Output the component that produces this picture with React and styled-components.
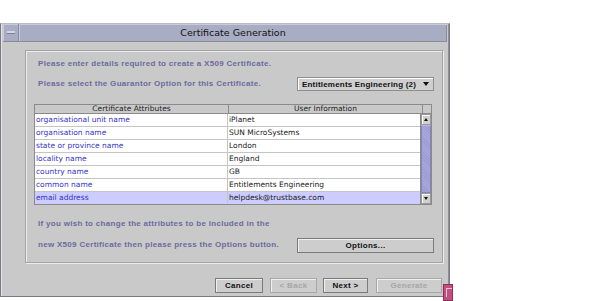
import React from "react";
import styled, { createGlobalStyle } from "styled-components";

const Global = createGlobalStyle`
  html, body { margin: 0; padding: 0; background: #ffffff; }
  body { font-family: "DejaVu Sans", "Liberation Sans", sans-serif; }
`;

const Page = styled.div`
  position: relative;
  width: 610px;
  height: 301px;
  padding-top: 23px;
  box-sizing: border-box;
`;

const Window = styled.div`
  width: 450px;
  height: 274px;
  box-sizing: border-box;
  border: 1px solid #7a7a86;
  border-top-color: #b8b8c4;
  background: #c9c9c9;
  padding: 0 2px 2px 2px;
  display: flex;
  flex-direction: column;
  box-shadow: inset 1px 0 0 #e4e4e4, inset -1px 0 0 #8e8e98;
`;

const TitleBar = styled.div`
  height: 17px;
  display: flex;
  border-bottom: 1px solid #8a8c9c;
  background: #a9adc4;
`;

const MenuBtn = styled.div`
  width: 15px;
  border-right: 1px solid #8a8c9c;
  box-shadow: inset 1px 1px 0 #c8cbdc;
  display: flex;
  align-items: center;
  justify-content: center;
  &::after {
    content: "";
    width: 8px;
    height: 2px;
    background: #d4d6e4;
    border-bottom: 1px solid #7e8092;
  }
`;

const Title = styled.div`
  flex: 1;
  text-align: center;
  font-size: 9.5px;
  line-height: 17px;
  color: #111;
  box-shadow: inset 1px 1px 0 #c8cbdc, inset -1px 0 0 #8a8c9c;
`;

const Body = styled.div`
  flex: 1;
  display: flex;
  flex-direction: column;
  padding: 8px 4px 0 22px;
`;

const Panel = styled.div`
  height: 213px;
  box-sizing: border-box;
  border: 1px solid #a4a4a4;
  box-shadow: inset 1px 1px 0 #ececec, 1px 1px 0 #ececec;
  padding: 7px 8px 0 8px;
  display: flex;
  flex-direction: column;
`;

const Label = styled.div`
  font-family: "Liberation Sans", "DejaVu Sans", sans-serif;
  font-size: 8px;
  font-weight: bold;
  color: #6b6b9e;
  line-height: 12px;
  padding-left: 4px;
  white-space: nowrap;
  letter-spacing: 0.3px;
  margin-top: ${(p) => p.$mt || 0}px;
`;

const Row = styled.div`
  display: flex;
  align-items: center;
  justify-content: space-between;
  margin-top: ${(p) => p.$mt || 0}px;
  height: ${(p) => p.$h || 14}px;
`;

const Combo = styled.div`
  width: 137px;
  height: 14px;
  box-sizing: border-box;
  border: 1px solid #8e8e8e;
  box-shadow: inset 1px 1px 0 #ffffff;
  background: #cfcfcf;
  display: flex;
  align-items: center;
  justify-content: space-between;
  padding: 0 4px 0 4px;
  font-family: "Liberation Sans", "DejaVu Sans", sans-serif;
  font-size: 8px;
  font-weight: bold;
  letter-spacing: 0.2px;
  color: #111;
  white-space: nowrap;
`;

const Arrow = styled.span`
  width: 0;
  height: 0;
  border-left: 3.5px solid transparent;
  border-right: 3.5px solid transparent;
  border-top: 4px solid #111;
`;

const TableWrap = styled.div`
  margin-top: 13px;
  width: 398px;
  display: flex;
  flex-direction: column;
`;

const Header = styled.div`
  display: grid;
  grid-template-columns: 194px 194px 10px;
  height: 9px;
  border-top: 1px solid #8a8a8a;
`;

const HeadCell = styled.div`
  font-size: 7.5px;
  line-height: 8px;
  text-align: center;
  color: #222;
  border-left: 1px solid #8a8a8a;
  border-right: ${(p) => (p.$last ? "1px solid #8a8a8a" : "0")};
  border-bottom: 1px solid #8a8a8a;
  box-sizing: border-box;
  overflow: hidden;
  white-space: nowrap;
`;

const TableBody = styled.div`
  display: flex;
  border: 1px solid #8a8a8a;
  border-top: 0;
  height: 90px;
`;

const Rows = styled.div`
  flex: 1;
  display: flex;
  flex-direction: column;
  background: #fff;
`;

const DataRow = styled.div`
  display: grid;
  grid-template-columns: 193px 1fr;
  height: 13px;
  box-sizing: border-box;
  border-bottom: 1px solid #c4c4c4;
  background: ${(p) => (p.$sel ? "#ccccff" : "#ffffff")};
  &:last-child { border-bottom: 0; height: 12px; }
`;

const Cell = styled.div`
  font-size: 7.5px;
  line-height: 12px;
  padding-left: 1px;
  color: ${(p) => (p.$key ? "#3535c4" : "#1a1a1a")};
  border-right: ${(p) => (p.$key ? "1px solid #c4c4c4" : "0")};
  white-space: nowrap;
  overflow: hidden;
`;

const Scroll = styled.div`
  width: 10px;
  display: flex;
  flex-direction: column;
  border-left: 1px solid #8a8a8a;
  background: #cccccc;
`;

const ScrollBtn = styled.div`
  height: 11px;
  box-sizing: border-box;
  border: 1px solid #9a9a9a;
  box-shadow: inset 1px 1px 0 #fff;
  background: #d0d0d0;
  display: flex;
  align-items: center;
  justify-content: center;
  &::after {
    content: "";
    width: 0;
    height: 0;
    border-left: 2.5px solid transparent;
    border-right: 2.5px solid transparent;
    ${(p) =>
      p.$down ? "border-top: 3px solid #111;" : "border-bottom: 3px solid #111;"}
  }
`;

const Thumb = styled.div`
  flex: 1;
  background: repeating-linear-gradient(45deg, #9c9cd0 0 1px, #a8a8dc 1px 2px);
  border: 1px solid #8484b8;
  border-top-color: #b8b8e8;
`;

const Button = styled.div`
  width: ${(p) => p.$w}px;
  height: 15px;
  box-sizing: border-box;
  border: 1px solid ${(p) => (p.$disabled ? "#a8a8a8" : "#7a7a7a")};
  box-shadow: inset 1px 1px 0 #f0f0f0;
  background: #cdcdcd;
  font-family: "Liberation Sans", "DejaVu Sans", sans-serif;
  font-size: 8px;
  font-weight: bold;
  line-height: 13px;
  text-align: center;
  color: ${(p) => (p.$disabled ? "#a6a6a6" : "#111")};
  margin-left: ${(p) => p.$ml || 0}px;
  letter-spacing: 0.3px;
`;

const Buttons = styled.div`
  display: flex;
  padding-left: 190px;
  margin-top: 15px;
`;

const Overlay = styled.div`
  position: absolute;
  left: 443px;
  top: 284px;
  width: 10px;
  height: 17px;
  box-sizing: border-box;
  background: #c2507e;
  border: 1px solid #8e2f5a;
  &::after {
    content: "";
    position: absolute;
    left: 2px;
    top: 3px;
    width: 5px;
    height: 8px;
    border-left: 1px solid #f4c4d8;
    border-top: 1px solid #f4c4d8;
  }
`;

const data = [
  ["organisational unit name", "iPlanet"],
  ["organisation name", "SUN MicroSystems"],
  ["state or province name", "London"],
  ["locality name", "England"],
  ["country name", "GB"],
  ["common name", "Entitlements Engineering"],
  ["email address", "helpdesk@trustbase.com"],
];

export default function App() {
  return (
    <Page>
      <Global />
      <Window>
        <TitleBar>
          <MenuBtn />
          <Title>Certificate Generation</Title>
        </TitleBar>
        <Body>
          <Panel>
            <Label>Please enter details required to create a X509 Certificate.</Label>
            <Row $mt={7} $h={14}>
              <Label>Please select the Guarantor Option for this Certificate.</Label>
              <Combo>
                <span>Entitlements Engineering (2)</span>
                <Arrow />
              </Combo>
            </Row>
            <TableWrap>
              <Header>
                <HeadCell>Certificate Attributes</HeadCell>
                <HeadCell>User Information</HeadCell>
                <HeadCell $last />
              </Header>
              <TableBody>
                <Rows>
                  {data.map(([k, v], i) => (
                    <DataRow key={k} $sel={i === data.length - 1}>
                      <Cell $key>{k}</Cell>
                      <Cell>{v}</Cell>
                    </DataRow>
                  ))}
                </Rows>
                <Scroll>
                  <ScrollBtn />
                  <Thumb />
                  <ScrollBtn $down />
                </Scroll>
              </TableBody>
            </TableWrap>
            <Label $mt={13}>
              If you wish to change the attributes to be included in the
            </Label>
            <Row $mt={8} $h={14}>
              <Label>new X509 Certificate then please press the Options button.</Label>
              <Button $w={137}>Options...</Button>
            </Row>
          </Panel>
          <Buttons>
            <Button $w={48}>Cancel</Button>
            <Button $w={47} $ml={7} $disabled>
              &lt; Back
            </Button>
            <Button $w={45} $ml={6}>
              Next &gt;
            </Button>
            <Button $w={66} $ml={8} $disabled>
              Generate
            </Button>
          </Buttons>
        </Body>
      </Window>
      <Overlay />
    </Page>
  );
}
